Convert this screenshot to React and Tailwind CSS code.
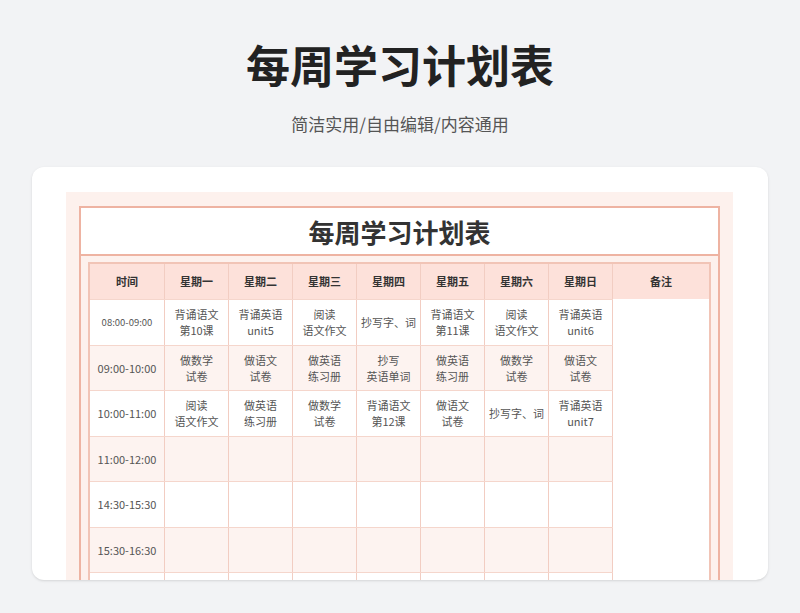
const days=["星期一","星期二","星期三","星期四","星期五","星期六","星期日"];
const rows=[
 ["08:00-09:00",[["背诵语文","第10课"],["背诵英语","unit5"],["阅读","语文作文"],["抄写字、词"],["背诵语文","第11课"],["阅读","语文作文"],["背诵英语","unit6"]],true],
 ["09:00-10:00",[["做数学","试卷"],["做语文","试卷"],["做英语","练习册"],["抄写","英语单词"],["做英语","练习册"],["做数学","试卷"],["做语文","试卷"]]],
 ["10:00-11:00",[["阅读","语文作文"],["做英语","练习册"],["做数学","试卷"],["背诵语文","第12课"],["做语文","试卷"],["抄写字、词"],["背诵英语","unit7"]]],
 ["11:00-12:00",[]],["14:30-15:30",[]],["15:30-16:30",[]],["",[]],
];
export default function App(){
 const f={fontFamily:'"Noto Sans CJK SC","Noto Sans",sans-serif'};
 return(<div style={f} className="w-[800px] h-[613px] bg-[#f2f3f5] flex flex-col items-center overflow-hidden">
  <div className="mt-[34px] text-[44px] leading-[60px] font-bold text-[#222]">每周学习计划表</div>
  <div className="mt-[18px] text-[17px] leading-[24px] text-[#555]">简洁实用/自由编辑/内容通用</div>
  <div className="mt-[31px] w-[736px] h-[413px] bg-white rounded-xl overflow-hidden shadow-sm pt-[25px] pl-[34px] shrink-0">
   <div className="w-[667px] h-[400px] bg-[#fdf1ed] pt-[14px] pl-[13px]">
    <div className="w-[641px] h-[400px] border-2 border-b-0 border-[#eeb3a2] bg-[#fdf1ed]">
     <div className="h-[48px] bg-white border-b-2 border-[#eeb3a2] flex items-center justify-center text-[26px] font-bold text-[#333]">每周学习计划表</div>
     <div className="px-[7px] pt-[6px]">
      <div className="flex border-2 border-[#f1c4b6] border-b-0">
       <div>
        <div className="flex h-[35px] bg-[#fde1da] text-[11px] font-bold text-[#333]">
         <div className="w-[75px] flex items-center justify-center border-r border-[#f2cdc2]">时间</div>
         {days.map(d=><div key={d} className="w-[64px] flex items-center justify-center border-r border-[#f2cdc2]">{d}</div>)}
        </div>
        {rows.map((r,i)=>(<div key={i} className={"flex h-[45.5px] border-t border-[#f5d6cc] text-[11px] leading-[16px] text-[#555] "+(i%2?"bg-[#fdf3f0]":"bg-white")}>
         <div className={"w-[75px] flex items-center justify-center border-r border-[#f2cdc2] "+(r[2]?"text-[9.5px]":"")}>{r[0]}</div>
         {days.map((d,j)=><div key={j} className="w-[64px] flex flex-col items-center justify-center border-r border-[#f2cdc2] text-center">{(r[1][j]||[]).map((t,k)=><div key={k}>{t}</div>)}</div>)}
        </div>))}
       </div>
       <div className="flex-1 bg-white">
        <div className="h-[35px] bg-[#fde1da] flex items-center justify-center text-[11px] font-bold text-[#333]">备注</div>
       </div>
      </div>
     </div>
    </div>
   </div>
  </div>
 </div>);
}
